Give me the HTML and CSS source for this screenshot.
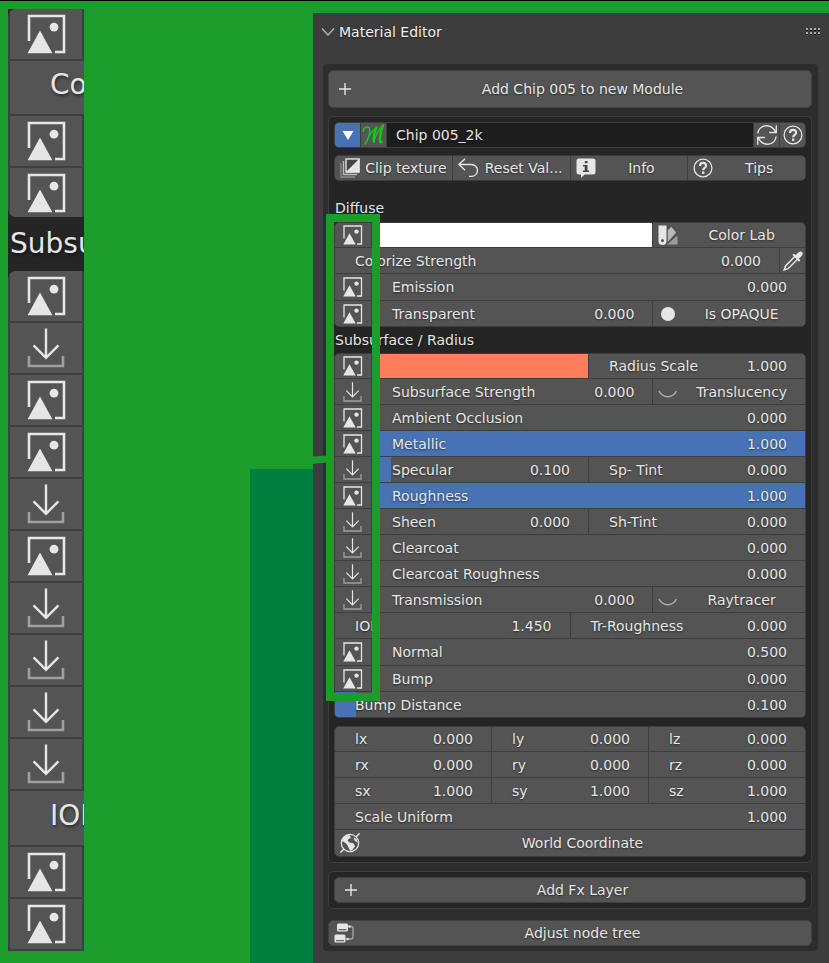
FILE: index.html
```html
<!DOCTYPE html>
<html lang="en">
<head>
<meta charset="utf-8">
<title>Material Editor</title>
<link rel="stylesheet" href="styles.css">
</head>
<body>
<svg class="defs" aria-hidden="true">
  <symbol id="image" viewBox="0 0 20 20">
    <path d="M1 13.500V1h17.500v18H14" fill="none" stroke="currentColor" stroke-width="1.300"/>
    <path d="M.3 19.600 6.500 8.300l6.200 11.300z" fill="currentColor"/><circle cx="13.500" cy="6.600" r="2.200" fill="currentColor"/>
  </symbol>
  <symbol id="download" viewBox="0 0 20 20">
    <path d="M1 14v5h17v-5" fill="none" stroke="#a0a0a0" stroke-width="1.3"/>
    <path d="M9.500 .3v14.700M3.300 8.700l6.200 6.200 6.200-6.200" fill="none" stroke="currentColor" stroke-width="1.2"/>
  </symbol>
  <symbol id="plus" viewBox="0 0 20 20"><path d="M11 4v12M5 10h12" fill="none" stroke="currentColor" stroke-width="1.4"/></symbol>
  <symbol id="help" viewBox="0 0 20 20">
    <circle cx="10" cy="10" r="8.900" fill="none" stroke="currentColor" stroke-width="1.300"/>
    <path d="M7 7.900C7 3.800 13.300 4 13.100 7.700c-.1 2.300-2.900 2.200-2.900 4.500" fill="none" stroke="currentColor" stroke-width="2.200"/><rect x="9" y="13.500" width="2.400" height="2.400" fill="currentColor"/>
  </symbol>
  <symbol id="refresh" viewBox="0 0 20 20">
    <path d="M.8 8.500C2.200-.5 14-2.500 18.600 7M19.300.3v7.200h-7.200M19.200 11.500C17.800 20.500 6 22.500 1.400 13M.7 19.700v-7.200h7.200" fill="none" stroke="currentColor" stroke-width="1.300"/>
  </symbol>
  <symbol id="clip" viewBox="0 0 20 20">
    <path d="M1 5v14h14" fill="none" stroke="#8c8c8c" stroke-width="1.300"/><path d="M3.500 3v13.500H17" fill="none" stroke="#bdbdbd" stroke-width="1.300"/>
    <rect x="6" y="1" width="13" height="13" fill="#454545" stroke="currentColor" stroke-width="1.400"/><path d="M19.500.5v14H5.500z" fill="currentColor"/>
  </symbol>
  <symbol id="undo" viewBox="0 0 20 20"><path d="M7 .8 1 6.500 7 12.200M1 6.500h12.500a5.900 5.900 0 0 1 0 11.900h-2.500" fill="none" stroke="currentColor" stroke-width="1.300"/></symbol>
  <symbol id="info" viewBox="0 0 20 20">
    <path d="M3 .5h14a2.500 2.500 0 0 1 2.500 2.500v11a2.500 2.500 0 0 1-2.500 2.500H8.500L5 20v-3.500H3A2.500 2.500 0 0 1 .5 14V3A2.500 2.500 0 0 1 3 .5z" fill="currentColor"/>
    <path d="M8.800 3h2.700v2.300H8.800zM7 7h4.500v5.500H13v1.600H7v-1.600h1.700V8.600H7z" fill="#454545"/>
  </symbol>
  <symbol id="swatches" viewBox="0 0 20 20">
    <path d="M.5.5h8v15.500a4 4 0 0 1-8 0z" fill="currentColor"/><circle cx="4.500" cy="15.700" r="1.400" fill="#454545"/>
    <path d="m13.300 1.800 4.800 5.700-8.300 9.500V5.500z" fill="#b9b9b9"/><path d="M18.300 11.500h1.200v8H9.200z" fill="#9b9b9b"/>
  </symbol>
  <symbol id="dropper" viewBox="0 0 20 20">
    <path d="m11.500 5.700-9 9.200-1.300 4 3.900-1.200 9.200-9.200" fill="none" stroke="currentColor" stroke-width="1.500"/>
    <path d="m9.500 4 1.300-1.200 2.200 1.300C15 .9 17.500-.3 19.200 1c1.200 1.700.2 4-3.200 6.300l1.300 2.200-1.300 1.200z" fill="currentColor"/>
  </symbol>
  <symbol id="sphere" viewBox="0 0 20 20"><circle cx="10" cy="10" r="7" fill="currentColor"/></symbol>
  <symbol id="eyelid" viewBox="0 0 20 20"><path d="M1 9c4 7.500 13.500 7.500 17.500 0" fill="none" stroke="#b0b0b0" stroke-width="1.500"/></symbol>
  <symbol id="globe" viewBox="0 0 20 20">
    <circle cx="10" cy="10" r="8.700" fill="none" stroke="currentColor" stroke-width="1.200"/><path d="M16 4 19.600.4M4 16 .4 19.600" stroke="currentColor" stroke-width="1.400"/>
    <path d="M3 4.500 7 2l3 .5.8 2.800-1.700.2-1.600 2L9 9.300l4.500 1.200 1.500 2.700-3 4-2 .3-2.500-5L6 10.300 2 8z" fill="currentColor"/><path d="m13.500 4.500 3 1.500 1.300 4-3.300-2.700z" fill="currentColor"/>
  </symbol>
  <symbol id="nodes" viewBox="0 0 20 20">
    <rect x="3" y=".5" width="11" height="8" rx="1.500" fill="currentColor"/><rect x=".5" y="11.500" width="11" height="8" rx="1.500" fill="currentColor"/>
    <path d="M4.500 6.700h8M2 17.700h8" stroke="#454545" stroke-width="1"/><path d="M15 3.500h2a2 2 0 0 1 2 2v8.500a2 2 0 0 1-2 2h-3.500" fill="none" stroke="#a6a6a6" stroke-width="1.300"/><circle cx="15.500" cy="3.500" r="1.300" fill="currentColor"/><circle cx="13.500" cy="16" r="1.300" fill="currentColor"/>
  </symbol>
  <symbol id="brand" viewBox="0 0 25 24">
    <path d="M2.200 8.500C2 5 5 3.500 8 4.500M8.300 4.500C9.500 9 8 15 4 21M5.500 19C7 14 11 8 15.500 4.500" fill="none" stroke="#18c818" stroke-width="1.500" stroke-linecap="round" stroke-linejoin="round"/>
    <path d="M15.500 4.500C13.500 9 12.300 14 12.800 18.500" fill="none" stroke="#18c818" stroke-width="2.300" stroke-linecap="round"/>
    <path d="M12.800 18.500C14.500 13 18 6 22 2.500" fill="none" stroke="#18c818" stroke-width="1.500" stroke-linecap="round"/>
    <path d="M22 2.500C20 8 18.500 13 19 18.500c.3 1.300 1 1 1.800.3" fill="none" stroke="#18c818" stroke-width="2.300" stroke-linecap="round"/>
  </symbol>
</svg>

<div class="page">
  <aside class="callout">
    <div class="strip">
      <div class="strip-group strip-short">
        <div class="tile"><svg><use href="#image"/></svg></div>
        <div class="tile wide">Co</div>
        <div class="tile"><svg><use href="#image"/></svg></div>
        <div class="tile"><svg><use href="#image"/></svg></div>
      </div>
      <div class="strip-title">Subsu</div>
      <div class="strip-group strip-long">
        <div class="tile"><svg><use href="#image"/></svg></div>
        <div class="tile"><svg><use href="#download"/></svg></div>
        <div class="tile"><svg><use href="#image"/></svg></div>
        <div class="tile"><svg><use href="#image"/></svg></div>
        <div class="tile"><svg><use href="#download"/></svg></div>
        <div class="tile"><svg><use href="#image"/></svg></div>
        <div class="tile"><svg><use href="#download"/></svg></div>
        <div class="tile"><svg><use href="#download"/></svg></div>
        <div class="tile"><svg><use href="#download"/></svg></div>
        <div class="tile"><svg><use href="#download"/></svg></div>
        <div class="tile wide">IOR</div>
        <div class="tile"><svg><use href="#image"/></svg></div>
        <div class="tile"><svg><use href="#image"/></svg></div>
      </div>
    </div>
    <div class="backdrop"></div>
  </aside>

  <main class="panel">
    <header class="head">
      <svg class="chevron" viewBox="0 0 14 10"><path d="m1 1.500 6 6.500 6-6.500" fill="none" stroke="#b4b4b4" stroke-width="1.300"/></svg>
      <h1>Material Editor</h1>
      <svg class="grip" viewBox="0 0 15 7"><path d="M0 1h15M0 5h15" stroke="#a8a8a8" stroke-width="2" stroke-dasharray="2 2"/><path d="M0 2.500h15M0 6.500h15" stroke="#111" stroke-width="1" stroke-dasharray="2 2"/></svg>
    </header>

    <div class="outer">
      <button class="solo tall"><svg class="icon"><use href="#plus"/></svg><span>Add Chip 005 to new Module</span></button>

      <section class="box">
        <div class="group name-row">
          <div class="row">
            <button class="cell square blue" aria-label="Expand"><svg class="icon" viewBox="0 0 20 20"><path d="M4.500 6h11l-5.500 9z" fill="#fff"/></svg></button>
            <button class="cell square" aria-label="Material"><svg class="brand"><use href="#brand"/></svg></button>
            <input class="name" type="text" value="Chip 005_2k" aria-label="Name">
            <button class="cell square" aria-label="Refresh"><svg class="icon"><use href="#refresh"/></svg></button>
            <button class="cell square" aria-label="Help"><svg class="icon"><use href="#help"/></svg></button>
          </div>
        </div>
        <div class="group tools">
          <div class="row">
            <button class="cell act"><svg class="icon"><use href="#clip"/></svg><span>Clip texture</span></button>
            <button class="cell act"><svg class="icon"><use href="#undo"/></svg><span>Reset Val...</span></button>
            <button class="cell act"><svg class="icon"><use href="#info"/></svg><span>Info</span></button>
            <button class="cell act"><svg class="icon"><use href="#help"/></svg><span>Tips</span></button>
          </div>
        </div>

        <div class="marked">
          <h2>Diffuse</h2>
          <div class="channels">
            <div class="group">
              <div class="row"><button class="cell tex" aria-label="Texture"><svg class="icon"><use href="#image"/></svg></button><button class="cell swatch white major" aria-label="Diffuse color"></button><button class="cell act minor"><svg class="icon"><use href="#swatches"/></svg><span>Color Lab</span></button></div>
              <div class="row"><label class="cell field">Colorize Strength<input type="text" value="0.000"></label><button class="cell square" aria-label="Pick color"><svg class="icon"><use href="#dropper"/></svg></button></div>
              <div class="row roomy"><button class="cell tex" aria-label="Texture"><svg class="icon"><use href="#image"/></svg></button><label class="cell field">Emission<input type="text" value="0.000"></label></div>
              <div class="row"><button class="cell tex" aria-label="Texture"><svg class="icon"><use href="#image"/></svg></button><label class="cell field major">Transparent<input type="text" value="0.000"></label><button class="cell act minor"><svg class="icon"><use href="#sphere"/></svg><span>Is OPAQUE</span></button></div>
            </div>
            <h2>Subsurface / Radius</h2>
            <div class="group">
              <div class="row"><button class="cell tex" aria-label="Texture"><svg class="icon"><use href="#image"/></svg></button><button class="cell swatch coral" aria-label="Subsurface color"></button><label class="cell field">Radius Scale<input type="text" value="1.000"></label></div>
              <div class="row"><button class="cell tex" aria-label="Load"><svg class="icon"><use href="#download"/></svg></button><label class="cell field major">Subsurface Strength<input type="text" value="0.000"></label><button class="cell act minor"><svg class="icon"><use href="#eyelid"/></svg><span>Translucency</span></button></div>
              <div class="row"><button class="cell tex" aria-label="Texture"><svg class="icon"><use href="#image"/></svg></button><label class="cell field">Ambient Occlusion<input type="text" value="0.000"></label></div>
              <div class="row"><button class="cell tex" aria-label="Texture"><svg class="icon"><use href="#image"/></svg></button><label class="cell field blue">Metallic<input type="text" value="1.000"></label></div>
              <div class="row"><button class="cell tex" aria-label="Load"><svg class="icon"><use href="#download"/></svg></button><label class="cell field part">Specular<input type="text" value="0.100"></label><label class="cell field">Sp- Tint<input type="text" value="0.000"></label></div>
              <div class="row"><button class="cell tex" aria-label="Texture"><svg class="icon"><use href="#image"/></svg></button><label class="cell field blue">Roughness<input type="text" value="1.000"></label></div>
              <div class="row"><button class="cell tex" aria-label="Load"><svg class="icon"><use href="#download"/></svg></button><label class="cell field">Sheen<input type="text" value="0.000"></label><label class="cell field">Sh-Tint<input type="text" value="0.000"></label></div>
              <div class="row"><button class="cell tex" aria-label="Load"><svg class="icon"><use href="#download"/></svg></button><label class="cell field">Clearcoat<input type="text" value="0.000"></label></div>
              <div class="row"><button class="cell tex" aria-label="Load"><svg class="icon"><use href="#download"/></svg></button><label class="cell field">Clearcoat Roughness<input type="text" value="0.000"></label></div>
              <div class="row"><button class="cell tex" aria-label="Load"><svg class="icon"><use href="#download"/></svg></button><label class="cell field major">Transmission<input type="text" value="0.000"></label><button class="cell act minor"><svg class="icon"><use href="#eyelid"/></svg><span>Raytracer</span></button></div>
              <div class="row"><label class="cell field">IOR<input type="text" value="1.450"></label><label class="cell field">Tr-Roughness<input type="text" value="0.000"></label></div>
              <div class="row roomy"><button class="cell tex" aria-label="Texture"><svg class="icon"><use href="#image"/></svg></button><label class="cell field">Normal<input type="text" value="0.500"></label></div>
              <div class="row"><button class="cell tex" aria-label="Texture"><svg class="icon"><use href="#image"/></svg></button><label class="cell field">Bump<input type="text" value="0.000"></label></div>
              <div class="row"><label class="cell field start">Bump Distance<input type="text" value="0.100"></label></div>
            </div>
            <div class="frame"><svg class="pointer" viewBox="0 0 14 10"><path d="M0 1.500 14 .500v7L0 9z" fill="#1c9c2a"/></svg></div>
          </div>
        </div>

        <div class="group transform">
          <div class="row"><label class="cell field">lx<input type="text" value="0.000"></label><label class="cell field">ly<input type="text" value="0.000"></label><label class="cell field">lz<input type="text" value="0.000"></label></div>
          <div class="row"><label class="cell field">rx<input type="text" value="0.000"></label><label class="cell field">ry<input type="text" value="0.000"></label><label class="cell field">rz<input type="text" value="0.000"></label></div>
          <div class="row"><label class="cell field">sx<input type="text" value="1.000"></label><label class="cell field">sy<input type="text" value="1.000"></label><label class="cell field">sz<input type="text" value="1.000"></label></div>
          <div class="row"><label class="cell field">Scale Uniform<input type="text" value="1.000"></label></div>
          <div class="row roomy"><button class="cell act"><svg class="icon"><use href="#globe"/></svg><span>World Coordinate</span></button></div>
        </div>
      </section>

      <section class="box"><button class="solo"><svg class="icon"><use href="#plus"/></svg><span>Add Fx Layer</span></button></section>
      <button class="solo last"><svg class="icon"><use href="#nodes"/></svg><span>Adjust node tree</span></button>
    </div>
  </main>
</div>
</body>
</html>
```
FILE: styles.css
```css
* { box-sizing: border-box; }

body {
  margin: 0;
  border-top: 1px solid #000;
  background: #1c9c2a;
  color: #e6e6e6;
  font: 14px/20px "DejaVu Sans", sans-serif;
  text-shadow: 0 1px 2px rgba(0, 0, 0, .5);
}

button, input {
  margin: 0;
  padding: 0;
  border: 0;
  background: none;
  color: inherit;
  font: inherit;
  text-shadow: inherit;
}

h1, h2 { margin: 0; font-size: 14px; font-weight: 400; }

.defs { display: block; width: 0; height: 0; }

.page {
  display: grid;
  grid-template-columns: 313px minmax(0, 1fr);
  min-height: calc(100vh - 1px);
}

/* Enlarged icon column */
.callout { display: flex; justify-content: space-between; }
.strip {
  display: flex;
  flex-direction: column;
  width: 76px;
  margin: 8px 0 12px 8px;
  overflow: hidden;
  background: #252525;
  font-size: 28px;
  text-shadow: 1px 2px 3px rgba(0, 0, 0, .5);
}
.strip-group {
  display: flex;
  flex-direction: column;
  gap: 2px;
  padding: 0 0 0 2px;
  background: #3f3f3f;
  border-radius: 8px 0 0 0;
}
.strip-short { flex: 4; border-bottom-left-radius: 8px; overflow: hidden; }
.strip-long { flex: 13; border-bottom: 2px solid #3f3f3f; overflow: hidden; }
.strip-title { height: 54px; padding-left: 2px; line-height: 54px; white-space: nowrap; }
.tile { flex: 1; display: flex; align-items: center; width: 72px; padding-left: 17px; background: #545454; }
.tile.wide { width: 74px; padding: 0 0 4px 40px; overflow: hidden; }
.tile svg { width: 40px; height: 40px; flex: none; }
.backdrop { width: 63px; margin-top: 468px; background: #00803f; }

/* Editor panel */
.panel {
  margin-top: 12px;
  padding: 0 11px 11px 10px;
  background: #3d3d3d;
}
.head { display: flex; align-items: center; height: 37px; margin-bottom: 14px; margin-right: -3px; }
.chevron { width: 14px; height: 10px; margin: 0 4px 0 -2px; }
.head h1 { flex: 1; color: #f0f0f0; }
.grip { width: 15px; height: 7px; }

.outer {
  display: flex;
  flex-direction: column;
  gap: 8px;
  padding: 6px 6px 5px 5px;
  border-radius: 4px;
  background: #2d2d2d;
}
.box { padding: 5px; border: 1px solid #3d3d3d; border-radius: 5px; background: #252525; }

.solo {
  display: flex;
  align-items: center;
  width: 100%;
  height: 26px;
  padding-left: 5px;
  border: 1px solid #404040;
  border-radius: 5px;
  background: #545454;
}
.solo span, .act span { flex: 1; text-align: center; white-space: nowrap; }
.tall { height: 38px; }
.last { margin-top: 3px; }

.icon { width: 20px; height: 20px; flex: none; }

.group {
  display: flex;
  flex-direction: column;
  gap: 1px;
  border: 1px solid #3d3d3d;
  border-radius: 5px;
  overflow: hidden;
  background: #3d3d3d;
}
.row { display: flex; gap: 1px; height: 25px; }
.row:first-child { height: 24px; }
.roomy { height: 26px; }
.tools { margin: 7px 0 14px; }
.transform { margin-top: 8px; }

.cell { display: flex; align-items: center; flex: 1 1 40px; min-width: 0; background: #545454; }
.square, .tex { flex: none; justify-content: center; width: 25px; }
.tex { width: 36px; }
.brand { width: 25px; height: 24px; }
.name { flex: 1; min-width: 0; padding: 0 9px; background: #1d1d1d; }
.act { padding-left: 5px; }
.major { flex-grow: 241; }
.minor { flex-grow: 112; }

.field { padding: 0 18px 0 20px; white-space: nowrap; }
.field input { flex: 1; width: 0; min-width: 0; height: 20px; text-align: right; }

.blue { background: #4772b3; }
.part { background: linear-gradient(90deg, #4772b3 9%, #545454 9%); }
.start { background: linear-gradient(90deg, #4772b3 21px, #545454 21px); }
.white { background: #fff; }
.coral { background: #ff7d5a; }

h2 { height: 26px; padding-left: 1px; line-height: 26px; }
.marked > h2 { height: 27px; }

/* Highlight round the texture column */
.channels { position: relative; }
.frame {
  position: absolute;
  top: -8px;
  bottom: 17px;
  left: -8px;
  width: 54px;
  border: 8px solid #1c9c2a;
  pointer-events: none;
}
.pointer { position: absolute; top: 233px; left: -21px; width: 14px; height: 10px; }
```
